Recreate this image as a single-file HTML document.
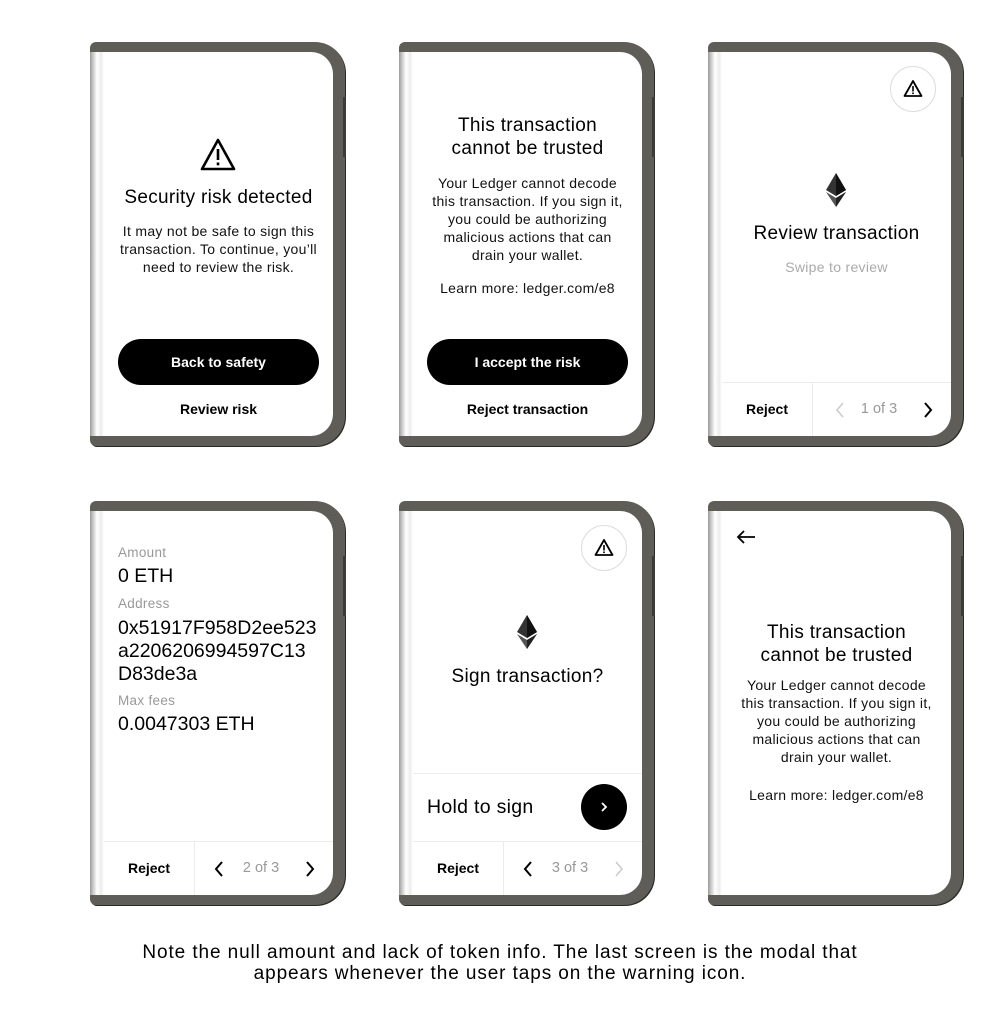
<!DOCTYPE html>
<html><head><meta charset="utf-8"><style>
*{margin:0;padding:0;box-sizing:border-box}
body{width:1000px;height:1010px;background:#fff;position:relative;font-family:"Liberation Sans",sans-serif;color:#000;overflow:hidden}
.dev{position:absolute;width:255px;height:404px;background:#5f5d57;border-radius:6px 30px 30px 6px;box-shadow:1px 1px 0 #2a2a28}
.strip{position:absolute;left:0;top:10px;width:14px;height:384px;background:linear-gradient(90deg,#9a9a98 0,#cfcfcf 25%,#fff 50%,#ececec 80%,#fff 100%)}
.btn1{position:absolute;left:253px;top:55px;width:3px;height:60px;background:#3c3b38}
.scr{position:absolute;left:14px;top:10px;width:229px;height:384px;background:#fff;border-radius:0 22px 22px 0;overflow:hidden}
.t{position:absolute;left:0;width:229px;text-align:center;white-space:nowrap}
.h{font-size:19px;line-height:23px;letter-spacing:0.3px}
.b{font-size:14px;line-height:18px;color:#111;letter-spacing:0.3px}
.pill{position:absolute;left:14px;top:287px;width:201px;height:46px;border-radius:23px;background:#000;color:#fff;font-weight:bold;font-size:14px;line-height:46px;text-align:center}
.lk{font-weight:bold;font-size:14px}
.foot{position:absolute;left:0;top:330px;width:229px;height:54px;border-top:1px solid #ececec}
.foot .rj{position:absolute;left:0;top:0;width:91px;height:54px;border-right:1px solid #ececec;text-align:center;line-height:52px;font-weight:bold;font-size:14px}
.foot .pg{position:absolute;left:132px;width:50px;text-align:center;top:0;line-height:52px;font-size:14.5px;color:#999}
.chev{position:absolute;top:19px}
.warnc{position:absolute;width:46px;height:46px;border-radius:50%;border:1px solid #ddd}
.lab{position:absolute;left:14px;font-size:13.5px;color:#999;letter-spacing:0.3px}
.val{position:absolute;left:14px;font-size:19.5px;line-height:23px;white-space:nowrap}
</style></head><body>

<!-- Device 1 -->
<div class="dev" style="left:90px;top:42px"><div class="strip"></div><div class="btn1"></div>
<div class="scr">
<svg style="position:absolute;left:95px;top:85px" width="38" height="36" viewBox="0 0 38 36"><path d="M19 3 L35 32 H3 Z" fill="none" stroke="#000" stroke-width="2.6" stroke-linejoin="round"/><rect x="17.7" y="12" width="2.6" height="11" fill="#000"/><rect x="17.7" y="25.5" width="2.6" height="2.8" fill="#000"/></svg>
<div class="t h" style="top:134px">Security risk detected</div>
<div class="t b" style="top:170px">It may not be safe to sign this<br>transaction. To continue, you’ll<br>need to review the risk.</div>
<div class="pill">Back to safety</div>
<div class="t lk" style="top:349px">Review risk</div>
</div></div>

<!-- Device 2 -->
<div class="dev" style="left:399px;top:42px"><div class="strip"></div><div class="btn1"></div>
<div class="scr">
<div class="t h" style="top:62px">This transaction<br>cannot be trusted</div>
<div class="t b" style="top:122px">Your Ledger cannot decode<br>this transaction. If you sign it,<br>you could be authorizing<br>malicious actions that can<br>drain your wallet.</div>
<div class="t b" style="top:227px">Learn more: ledger.com/e8</div>
<div class="pill">I accept the risk</div>
<div class="t lk" style="top:349px">Reject transaction</div>
</div></div>

<!-- Device 3 -->
<div class="dev" style="left:708px;top:42px"><div class="strip"></div><div class="btn1"></div>
<div class="scr">
<div class="warnc" style="left:168px;top:14px"><svg style="position:absolute;left:12px;top:12px" width="20" height="19" viewBox="0 0 20 19"><path d="M10 2 L18.5 17 H1.5 Z" fill="none" stroke="#000" stroke-width="1.8" stroke-linejoin="round"/><rect x="9.2" y="7" width="1.6" height="5.5" fill="#000"/><rect x="9.2" y="13.5" width="1.6" height="1.6" fill="#000"/></svg></div>
<svg style="position:absolute;left:104px;top:121px" width="20" height="34" viewBox="0 0 20 34"><path d="M10 0 L20 17 L10 23 L0 17Z" fill="#333"/><path d="M10 0 L20 17 L10 23Z" fill="#111"/><path d="M0 19 L10 25 L20 19 L10 34Z" fill="#555"/><path d="M10 25 L20 19 L10 34Z" fill="#222"/></svg>
<div class="t h" style="top:170px">Review transaction</div>
<div class="t" style="top:207px;font-size:14px;color:#aaa;letter-spacing:0.3px">Swipe to review</div>
<div class="foot"><div class="rj">Reject</div>
<svg class="chev" style="left:113px" width="10" height="16" viewBox="0 0 10 16"><path d="M8 1 L2 8 L8 15" fill="none" stroke="#ccc" stroke-width="1.6"/></svg>
<div class="pg">1 of 3</div>
<svg class="chev" style="left:201px" width="10" height="16" viewBox="0 0 10 16"><path d="M2 1 L8 8 L2 15" fill="none" stroke="#000" stroke-width="2"/></svg>
</div>
</div></div>

<!-- Device 4 -->
<div class="dev" style="left:90px;top:501px"><div class="strip"></div><div class="btn1"></div>
<div class="scr">
<div class="lab" style="top:34px">Amount</div>
<div class="val" style="top:54px">0 ETH</div>
<div class="lab" style="top:85px">Address</div>
<div class="val" style="top:106px">0x51917F958D2ee523<br>a2206206994597C13<br>D83de3a</div>
<div class="lab" style="top:182px">Max fees</div>
<div class="val" style="top:202px">0.0047303 ETH</div>
<div class="foot"><div class="rj">Reject</div>
<svg class="chev" style="left:110px" width="10" height="16" viewBox="0 0 10 16"><path d="M8 1 L2 8 L8 15" fill="none" stroke="#000" stroke-width="2"/></svg>
<div class="pg">2 of 3</div>
<svg class="chev" style="left:201px" width="10" height="16" viewBox="0 0 10 16"><path d="M2 1 L8 8 L2 15" fill="none" stroke="#000" stroke-width="2"/></svg>
</div>
</div></div>

<!-- Device 5 -->
<div class="dev" style="left:399px;top:501px"><div class="strip"></div><div class="btn1"></div>
<div class="scr">
<div class="warnc" style="left:168px;top:14px"><svg style="position:absolute;left:12px;top:12px" width="20" height="19" viewBox="0 0 20 19"><path d="M10 2 L18.5 17 H1.5 Z" fill="none" stroke="#000" stroke-width="1.8" stroke-linejoin="round"/><rect x="9.2" y="7" width="1.6" height="5.5" fill="#000"/><rect x="9.2" y="13.5" width="1.6" height="1.6" fill="#000"/></svg></div>
<svg style="position:absolute;left:104px;top:104px" width="20" height="34" viewBox="0 0 20 34"><path d="M10 0 L20 17 L10 23 L0 17Z" fill="#333"/><path d="M10 0 L20 17 L10 23Z" fill="#111"/><path d="M0 19 L10 25 L20 19 L10 34Z" fill="#555"/><path d="M10 25 L20 19 L10 34Z" fill="#222"/></svg>
<div class="t h" style="top:154px">Sign transaction?</div>
<div style="position:absolute;left:0;top:262px;width:229px;height:68px;border-top:1px solid #ececec">
<div style="position:absolute;left:14px;top:22px;font-size:19.5px;letter-spacing:0.3px">Hold to sign</div>
<div style="position:absolute;left:168px;top:10px;width:46px;height:46px;border-radius:50%;background:#000"><svg style="position:absolute;left:19px;top:17px" width="8" height="12" viewBox="0 0 8 12"><path d="M2 2 L6 6 L2 10" fill="none" stroke="#fff" stroke-width="1.8"/></svg></div>
</div>
<div class="foot"><div class="rj">Reject</div>
<svg class="chev" style="left:110px" width="10" height="16" viewBox="0 0 10 16"><path d="M8 1 L2 8 L8 15" fill="none" stroke="#000" stroke-width="2"/></svg>
<div class="pg">3 of 3</div>
<svg class="chev" style="left:201px" width="10" height="16" viewBox="0 0 10 16"><path d="M2 1 L8 8 L2 15" fill="none" stroke="#ccc" stroke-width="1.6"/></svg>
</div>
</div></div>

<!-- Device 6 -->
<div class="dev" style="left:708px;top:501px"><div class="strip"></div><div class="btn1"></div>
<div class="scr">
<svg style="position:absolute;left:14px;top:18px" width="20" height="16" viewBox="0 0 20 16"><path d="M19 8 H2 M8 2 L2 8 L8 14" fill="none" stroke="#000" stroke-width="1.8"/></svg>
<div class="t h" style="top:110px">This transaction<br>cannot be trusted</div>
<div class="t b" style="top:165px">Your Ledger cannot decode<br>this transaction. If you sign it,<br>you could be authorizing<br>malicious actions that can<br>drain your wallet.</div>
<div class="t b" style="top:275px">Learn more: ledger.com/e8</div>
</div></div>

<div style="position:absolute;left:0;top:942px;width:1000px;text-align:center;font-size:19px;line-height:21px;letter-spacing:0.9px;white-space:nowrap">Note the null amount and lack of token info. The last screen is the modal that<br>appears whenever the user taps on the warning icon.</div>
</body></html>
